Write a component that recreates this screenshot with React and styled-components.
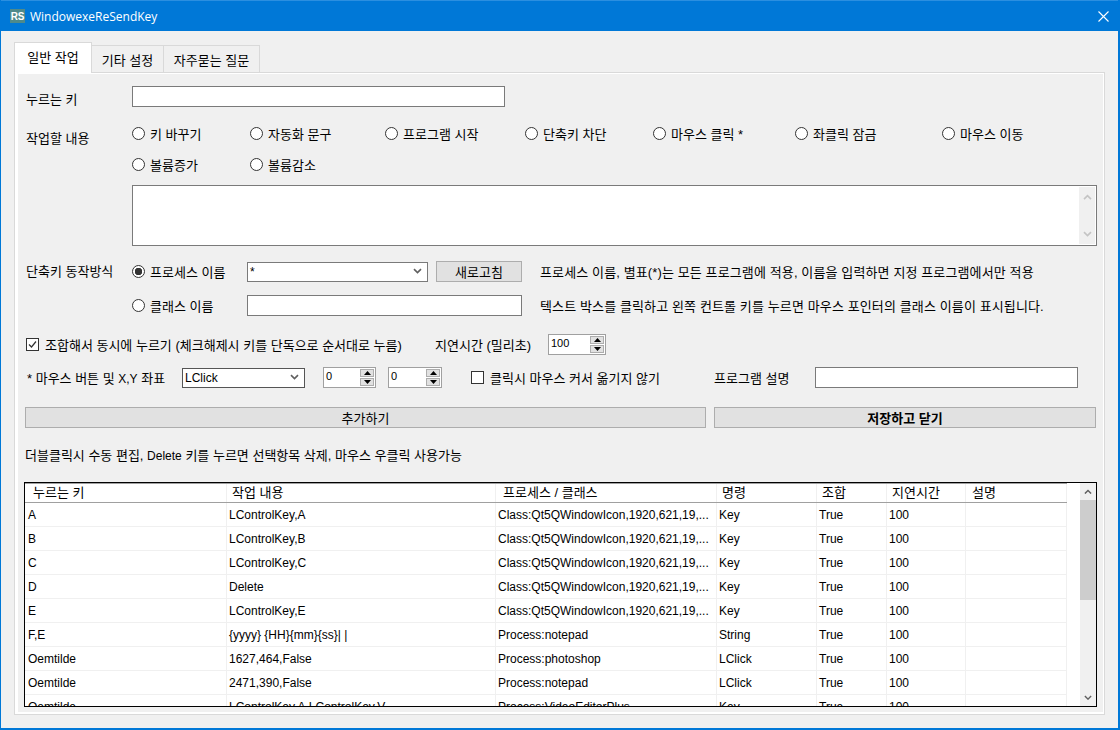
import React from "react";
import styled, {createGlobalStyle} from "styled-components";

const fonts = `"Liberation Sans", "Noto Sans CJK KR", sans-serif`;

const columns = [
    {title: "누르는 키", width: 202, pad: 8},
    {title: "작업 내용", width: 269, pad: 5},
    {title: "프로세스 / 클래스", width: 221, pad: 7},
    {title: "명령", width: 100, pad: 5},
    {title: "조합", width: 70, pad: 5},
    {title: "지연시간", width: 79, pad: 5},
    {title: "설명", width: 101, pad: 6},
];

const classTarget = "Class:Qt5QWindowIcon,1920,621,19,...";
const rows = [
    ["A", "LControlKey,A", classTarget, "Key", "True", "100", ""],
    ["B", "LControlKey,B", classTarget, "Key", "True", "100", ""],
    ["C", "LControlKey,C", classTarget, "Key", "True", "100", ""],
    ["D", "Delete", classTarget, "Key", "True", "100", ""],
    ["E", "LControlKey,E", classTarget, "Key", "True", "100", ""],
    ["F,E", "{yyyy} {HH}{mm}{ss}| |", "Process:notepad", "String", "True", "100", ""],
    ["Oemtilde", "1627,464,False", "Process:photoshop", "LClick", "True", "100", ""],
    ["Oemtilde", "2471,390,False", "Process:notepad", "LClick", "True", "100", ""],
    ["Oemtilde", "LControlKey,A,LControlKey,V", "Process:VideoEditorPlus", "Key", "True", "100", ""],
];

const actions = [
    {label: "키 바꾸기", width: 118},
    {label: "자동화 문구", width: 135},
    {label: "프로그램 시작", width: 140},
    {label: "단축키 차단", width: 128},
    {label: "마우스 클릭 *", width: 142},
    {label: "좌클릭 잠금", width: 147},
    {label: "마우스 이동", width: 100},
];

const Chevron = ({up, color = "#606060", size = 9}) => (
    <svg width={size} height={size * 0.7} viewBox="0 0 9 6">
        <path d={up ? "M1 5L4.5 1.5L8 5" : "M1 1L4.5 4.5L8 1"} fill="none" stroke={color} strokeWidth="1.6"/>
    </svg>
);

const Radio = ({label, checked, width}) => (
    <RadioItem $width={width}>
        <RadioCircle $checked={checked}/>
        {label}
    </RadioItem>
);

const Spinner = ({value, width}) => (
    <SpinBox $width={width}>
        <SpinValue>{value}</SpinValue>
        <SpinButtons>
            <SpinButton>
                <svg width="7" height="4" viewBox="0 0 7 4"><path d="M3.5 0L7 4H0Z" fill="#000"/></svg>
            </SpinButton>
            <SpinButton>
                <svg width="7" height="4" viewBox="0 0 7 4"><path d="M0 0H7L3.5 4Z" fill="#000"/></svg>
            </SpinButton>
        </SpinButtons>
    </SpinBox>
);

const Combo = ({value, width, dark}) => (
    <ComboBox $width={width} $dark={dark}>
        <ComboValue>{value}</ComboValue>
        <Chevron color="#606060"/>
    </ComboBox>
);

const App = () => {
    return (
        <Window>
            <GlobalStyle/>
            <TitleBar>
                <AppIcon>RS</AppIcon>
                <TitleText>WindowexeReSendKey</TitleText>
                <CloseButton>
                    <svg width="11" height="11" viewBox="0 0 11 11">
                        <path d="M0.5 0.5L10.5 10.5M10.5 0.5L0.5 10.5" stroke="#fff" strokeWidth="1.1"/>
                    </svg>
                </CloseButton>
            </TitleBar>
            <Content>
                <Tabs>
                    <Tab $active>일반 작업</Tab>
                    <Tab $width={72}>기타 설정</Tab>
                    <Tab $width={96}>자주묻는 질문</Tab>
                </Tabs>
                <Panel>
                    <Form>
                        <Row $height={21}>
                            <FieldLabel $drop={1.5}>누르는 키</FieldLabel>
                            <TextBox $width={373}/>
                        </Row>
                        <Row $height={20} $top={16}>
                            <FieldLabel $drop={4}>작업할 내용</FieldLabel>
                            {actions.map(action => <Radio key={action.label} label={action.label} width={action.width}/>)}
                        </Row>
                        <Row $height={20} $top={11}>
                            <FieldLabel/>
                            <Radio label="볼륨증가" width={118}/>
                            <Radio label="볼륨감소" width={135}/>
                        </Row>
                        <Row $height={61} $top={11}>
                            <FieldLabel/>
                            <TextArea>
                                <TextAreaScroll>
                                    <Chevron up color="#c4c4c4"/>
                                    <Chevron color="#c4c4c4"/>
                                </TextAreaScroll>
                            </TextArea>
                        </Row>
                        <Row $height={21} $top={15}>
                            <FieldLabel $rise={1}>단축키 동작방식</FieldLabel>
                            <Radio label="프로세스 이름" checked width={115}/>
                            <Combo value="*" width={181}/>
                            <GrayButton>새로고침</GrayButton>
                            <Help>프로세스 이름, 별표(*)는 모든 프로그램에 적용, 이름을 입력하면 지정 프로그램에서만 적용</Help>
                        </Row>
                        <Row $height={21} $top={13}>
                            <FieldLabel/>
                            <Radio label="클래스 이름" width={115}/>
                            <TextBox $width={275}/>
                            <Help $left={18}>텍스트 박스를 클릭하고 왼쪽 컨트롤 키를 누르면 마우스 포인터의 클래스 이름이 표시됩니다.</Help>
                        </Row>
                        <Row $height={21} $top={18}>
                            <CheckItem $width={409} $left={1}>
                                <CheckBox $checked>
                                    <svg width="11" height="11" viewBox="0 0 11 11">
                                        <path d="M2 5.5L4.5 8L9 2.5" fill="none" stroke="#333" strokeWidth="1.2"/>
                                    </svg>
                                </CheckBox>
                                조합해서 동시에 누르기 (체크해제시 키를 단독으로 순서대로 누름)
                            </CheckItem>
                            <PlainText $width={113}>지연시간 (밀리초)</PlainText>
                            <Spinner value="100" width={58}/>
                        </Row>
                        <Row $height={21} $top={12}>
                            <PlainText $width={155} $left={2}>* 마우스 버튼 및 <Latin>X,Y</Latin> 좌표</PlainText>
                            <Combo value="LClick" width={123} dark/>
                            <SpinGap/>
                            <Spinner value="0" width={53}/>
                            <SpinGapSmall/>
                            <Spinner value="0" width={54}/>
                            <CheckItem $width={243} $left={29}>
                                <CheckBox/>
                                클릭시 마우스 커서 옮기지 않기
                            </CheckItem>
                            <PlainText $width={101}>프로그램 설명</PlainText>
                            <TextBox $width={263}/>
                        </Row>
                        <Row $height={21} $top={19}>
                            <WideButton $width={681}>추가하기</WideButton>
                            <WideButton $width={382} $left={8} $bold>저장하고 닫기</WideButton>
                        </Row>
                        <Row $height={16} $top={18}>
                            <PlainText $left={0}>더블클릭시 수동 편집, <Latin>Delete</Latin> 키를 누르면 선택항목 삭제, 마우스 우클릭 사용가능</PlainText>
                        </Row>
                        <ListView>
                            <ListBody>
                                <HeaderRow>
                                    {columns.map(col => <HeaderCell key={col.title} $width={col.width} $pad={col.pad}>{col.title}</HeaderCell>)}
                                </HeaderRow>
                                {rows.map((row, i) => (
                                    <DataRow key={i}>
                                        {row.map((cell, j) => <DataCell key={j} $width={columns[j].width}>{cell}</DataCell>)}
                                    </DataRow>
                                ))}
                            </ListBody>
                            <ScrollBar>
                                <ScrollEnd><Chevron up size={8}/></ScrollEnd>
                                <ScrollTrack><ScrollThumb/></ScrollTrack>
                                <ScrollEnd><Chevron size={8}/></ScrollEnd>
                            </ScrollBar>
                        </ListView>
                    </Form>
                </Panel>
            </Content>
        </Window>
    );
};

export default App;

const GlobalStyle = createGlobalStyle`
  html, body {
    margin: 0;
    padding: 0;
    background: #f0f0f0;
    overflow: hidden;
  }
  * {
    box-sizing: border-box;
  }
`
const Window = styled.div`
  width: 1120px;
  height: 730px;
  display: flex;
  flex-direction: column;
  border: 1px solid #0078d7;
  border-width: 0 2px 2px 1px;
  background: #f0f0f0;
  font-family: ${fonts};
  font-size: 13px;
  color: #000;
  overflow: hidden;
`
const TitleBar = styled.div`
  height: 31px;
  flex: none;
  display: flex;
  align-items: center;
  padding: 0 9px 0 9px;
  background: #0078d7;
  color: #fff;
  border-top: 1px solid #2b8fe0;
`
const AppIcon = styled.div`
  width: 15px;
  height: 14px;
  display: flex;
  align-items: center;
  justify-content: center;
  background: #4f8a8b;
  color: #fff;
  font-size: 10px;
  font-weight: bold;
  letter-spacing: -0.3px;
`
const TitleText = styled.div`
  margin-left: 5px;
  flex: 1;
  font-family: "Open Sans", sans-serif;
  font-size: 12px;
`
const CloseButton = styled.div`
  display: flex;
  align-items: center;
`
const Content = styled.div`
  flex: 1;
  display: flex;
  flex-direction: column;
  padding: 12px 13px 13px 13px;
  min-height: 0;
`
const Tabs = styled.div`
  height: 30px;
  flex: none;
  display: flex;
  align-items: flex-end;
  position: relative;
  z-index: 1;
  margin-bottom: -1px;
`
const Tab = styled.div`
  height: ${props => props.$active ? 31 : 28}px;
  width: ${props => props.$width || 78}px;
  display: flex;
  align-items: center;
  justify-content: center;
  background: ${props => props.$active ? "#fff" : "#f0f0f0"};
  border: 1px solid #d9d9d9;
  border-bottom: ${props => props.$active ? "none" : "1px solid #d9d9d9"};
  border-left: ${props => props.$active ? "1px solid #d9d9d9" : "none"};
  padding-bottom: ${props => props.$active ? 4 : 0}px;
`
const Panel = styled.div`
  flex: 1;
  width: 1091px;
  border: 1px solid #d9d9d9;
  min-height: 0;
`
const Form = styled.div`
  height: 100%;
  display: flex;
  flex-direction: column;
  border-style: solid;
  border-color: #fff;
  border-width: 1px 1px 2px 3px;
  padding: 12px 7px 0 7px;
  background: #f0f0f0;
  overflow: hidden;
`
const Row = styled.div`
  height: ${props => props.$height}px;
  margin-top: ${props => props.$top || 0}px;
  flex: none;
  display: flex;
  align-items: center;
  white-space: nowrap;
`
const FieldLabel = styled.div`
  width: 107px;
  flex: none;
  padding-left: 1px;
  padding-top: ${props => (props.$drop || 0) * 2}px;
  padding-bottom: ${props => (props.$rise || 0) * 2}px;
`
const PlainText = styled.div`
  width: ${props => props.$width ? props.$width + "px" : "auto"};
  flex: none;
  margin-left: ${props => props.$left || 0}px;
`
const Latin = styled.span`
  font-size: 12px;
`
const Help = styled.div`
  margin-left: ${props => props.$left || 18}px;
  letter-spacing: 0.12px;
`
const TextBox = styled.div`
  width: ${props => props.$width}px;
  height: 21px;
  flex: none;
  background: #fff;
  border: 1px solid #7a7a7a;
`
const TextArea = styled.div`
  width: 965px;
  height: 61px;
  flex: none;
  display: flex;
  justify-content: flex-end;
  background: #fff;
  border: 1px solid #7a7a7a;
  padding: 1px;
`
const TextAreaScroll = styled.div`
  width: 16px;
  display: flex;
  flex-direction: column;
  align-items: center;
  justify-content: space-between;
  padding: 7px 0;
  background: #f0f0f0;
`
const RadioItem = styled.div`
  width: ${props => props.$width}px;
  flex: none;
  display: flex;
  align-items: center;
  gap: 5px;
`
const RadioCircle = styled.div`
  width: 13px;
  height: 13px;
  flex: none;
  border-radius: 50%;
  border: 1px solid #333;
  background: ${props => props.$checked
    ? "radial-gradient(circle, #333 0 3.5px, #fff 4px)"
    : "#fff"};
`
const CheckItem = styled.div`
  width: ${props => props.$width}px;
  flex: none;
  display: flex;
  align-items: center;
  gap: 6px;
  margin-left: ${props => props.$left || 0}px;
`
const CheckBox = styled.div`
  width: 13px;
  height: 13px;
  flex: none;
  display: flex;
  align-items: center;
  justify-content: center;
  background: #fff;
  border: 1px solid #333;
`
const ComboBox = styled.div`
  width: ${props => props.$width}px;
  height: 20px;
  flex: none;
  display: flex;
  align-items: center;
  justify-content: space-between;
  padding: 0 5px 0 2px;
  background: #fff;
  border: 1px solid ${props => props.$dark ? "#555" : "#7a7a7a"};
`
const ComboValue = styled.div`
  font-size: 12px;
`
const GrayButton = styled.div`
  width: 86px;
  height: 21px;
  flex: none;
  margin-left: 8px;
  display: flex;
  align-items: center;
  justify-content: center;
  background: #e1e1e1;
  border: 1px solid #adadad;
`
const WideButton = styled.div`
  width: ${props => props.$width}px;
  height: 21px;
  flex: none;
  margin-left: ${props => props.$left || 0}px;
  display: flex;
  align-items: center;
  justify-content: center;
  background: #e1e1e1;
  border: 1px solid #adadad;
  font-weight: ${props => props.$bold ? "bold" : "normal"};
`
const SpinBox = styled.div`
  width: ${props => props.$width}px;
  height: 21px;
  flex: none;
  display: flex;
  justify-content: space-between;
  background: #fff;
  border: 1px solid #a0a0a0;
  padding: 1px;
`
const SpinValue = styled.div`
  padding-left: 1px;
  font-size: 11px;
  line-height: 15px;
`
const SpinButtons = styled.div`
  width: 14px;
  display: flex;
  flex-direction: column;
  gap: 1px;
`
const SpinButton = styled.div`
  flex: 1;
  display: flex;
  align-items: center;
  justify-content: center;
  background: #e1e1e1;
  border: 1px solid #adadad;
`
const SpinGap = styled.div`
  width: 18px;
  flex: none;
`
const SpinGapSmall = styled.div`
  width: 12px;
  flex: none;
`
const ListView = styled.div`
  width: 1073px;
  height: 225px;
  flex: none;
  margin: 20px 0 0 -1px;
  display: flex;
  background: #fff;
  border: 1px solid #000;
  overflow: hidden;
`
const ListBody = styled.div`
  width: 1042px;
  flex: none;
  overflow: hidden;
`
const HeaderRow = styled.div`
  height: 20px;
  display: flex;
  border-top: 1px solid #a0a0a0;
  border-bottom: 1px solid #a0a0a0;
`
const HeaderCell = styled.div`
  width: ${props => props.$width}px;
  flex: none;
  padding-left: ${props => props.$pad}px;
  line-height: 17px;
  border-right: 1px solid #f0f0f0;
`
const DataRow = styled.div`
  height: 24px;
  display: flex;
  border-bottom: 1px solid #f0f0f0;
`
const DataCell = styled.div`
  width: ${props => props.$width}px;
  flex: none;
  padding-left: 2px;
  font-size: 12px;
  line-height: 24px;
  white-space: nowrap;
  overflow: hidden;
  border-right: 1px solid #f0f0f0;
  &:first-child {
    padding-left: 3px;
  }
`
const ScrollBar = styled.div`
  width: 16px;
  margin-left: 13px;
  flex: none;
  display: flex;
  flex-direction: column;
  background: #f0f0f0;
`
const ScrollEnd = styled.div`
  height: 17px;
  flex: none;
  display: flex;
  align-items: center;
  justify-content: center;
`
const ScrollTrack = styled.div`
  flex: 1;
`
const ScrollThumb = styled.div`
  height: 100px;
  background: #cdcdcd;
`
